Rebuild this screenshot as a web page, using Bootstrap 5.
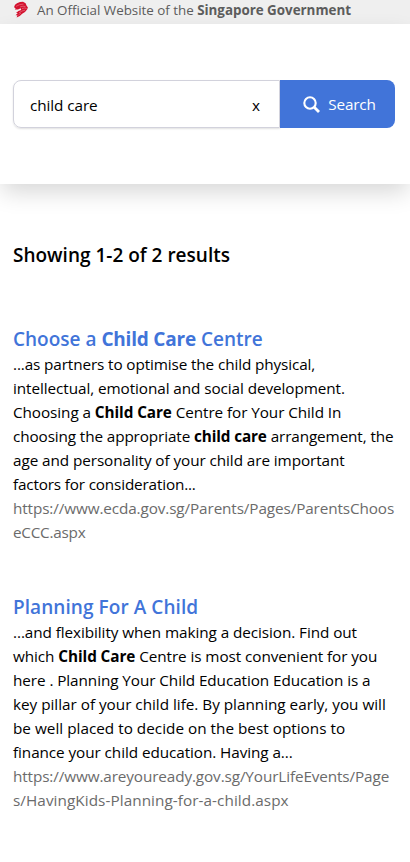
<!DOCTYPE html>
<html lang="en">
<head>
<meta charset="utf-8">
<meta name="viewport" content="width=device-width, initial-scale=1">
<title>Search results</title>
<link rel="stylesheet" href="https://cdn.jsdelivr.net/npm/bootstrap@5.3.0/dist/css/bootstrap.min.css">
<style>
body{font-family:"Segoe UI","Open Sans","Noto Sans",sans-serif;font-size:15.3px;line-height:24px;color:#000;letter-spacing:-.08px;overflow-x:hidden}
b{font-weight:700}
.gov-bar{height:24px;background:#efefef;color:#5c5c5c;font-size:13.4px;line-height:20px;padding-left:13px;letter-spacing:-.02px}
.gov-bar svg{margin-right:8px}
.search-panel{height:160px;padding:56px 15px 0 13px;box-shadow:0 10px 22px -2px rgba(0,0,0,.16)}
.search-box{height:48px;border:1px solid #d2d2dc;border-radius:8px 0 0 8px;box-shadow:0 1px 2px rgba(0,0,0,.12);padding:2px 19px 0 16px}
.search-btn{width:115px;height:48px;background:#4174d9;color:#fff;border-radius:0 8px 8px 0;border:0;font-size:inherit;letter-spacing:-.15px;padding:0 4px 0 8px}
.results{padding:59px 12px 0 13px}
.results h1,.results h2{font-size:19px;font-weight:600;line-height:24px;margin:0;letter-spacing:0}
.results h2{color:#4174d9}
.results h2 b{letter-spacing:-.2px}
.results h2.track-g{letter-spacing:.07px}
.results article{margin-top:60px}
.results article + article{margin-top:51px}
.results h2 + p{padding-top:1px}
.results p span{white-space:nowrap}
.result-url{color:#6b6b6b}
.track-a{letter-spacing:-.25px}
.track-b{letter-spacing:-.17px}
.track-c{letter-spacing:-.12px}
.track-d{letter-spacing:-.02px}
.track-e{letter-spacing:.01px}
.track-f{letter-spacing:.06px}
</style>
</head>
<body>
<div class="gov-bar d-flex">
<svg width="16" height="18" viewBox="0 0 16 18"><path fill="#d3122f" d="M1 7.3 2 4.8 4 3.2 7 1.9 10 1.7 12.6 3.2 13.5 5.4 14.9 7.4 14.1 9.6 12 12 9.2 13.8 6.8 16 3.6 17.4 4.5 15.2 2.6 15.3 4.8 12.9 3 13 5.4 11.1 8.2 10 7.6 8.3 5 9.4 1.8 9.6 2.6 8.3z"/><path d="M3 6.4 6.5 4.7 10.5 4.1M7.2 6.9 10 6.2 12.5 6.6M9 8.6 11.5 8 13.6 8.5M6 12.8 9 11 12 10.2M5.4 15 8 12.9" fill="none" stroke="#ee8d9b" stroke-width=".55"/></svg>
<span>An Official Website of the <b>Singapore Government</b></span>
</div>
<header class="search-panel d-flex align-items-start">
<div class="search-box flex-grow-1 d-flex align-items-center justify-content-between"><span>child care</span><span>x</span></div>
<button class="search-btn d-flex align-items-center justify-content-center gap-2" type="button">
<svg width="17" height="17" viewBox="0 0 17 17" fill="none" stroke="#fff" stroke-width="2.1"><circle cx="7" cy="7" r="5.7"/><path d="m11 11 5 5" stroke-width="2.8"/></svg><span>Search</span></button>
</header>
<main class="results">
<h1>Showing 1-2 of 2 results</h1>
<article>
<h2>Choose a <b>Child Care</b> Centre</h2>
<p class="mb-0"><span class="track-c">...as partners to optimise the child physical,</span><br><span>intellectual, emotional and social development.</span><br><span>Choosing a <b>Child Care</b> Centre for Your Child In</span><br><span class="track-c">choosing the appropriate <b>child care</b> arrangement, the</span><br><span>age and personality of your child are important</span><br><span class="track-b">factors for consideration...</span></p>
<p class="mb-0 result-url"><span class="track-c">https://www.ecda.gov.sg/Parents/Pages/ParentsChoos</span><br><span class="track-a">eCCC.aspx</span></p>
</article>
<article>
<h2 class="track-g">Planning For A Child</h2>
<p class="mb-0"><span>...and flexibility when making a decision. Find out</span><br><span>which <b>Child Care</b> Centre is most convenient for you</span><br><span>here . Planning Your Child Education Education is a</span><br><span class="track-d">key pillar of your child life. By planning early, you will</span><br><span class="track-e">be well placed to decide on the best options to</span><br><span>finance your child education. Having a...</span></p>
<p class="mb-0 result-url"><span class="track-c">https://www.areyouready.gov.sg/YourLifeEvents/Page</span><br><span class="track-f">s/HavingKids-Planning-for-a-child.aspx</span></p>
</article>
</main>
<script src="https://cdn.jsdelivr.net/npm/bootstrap@5.3.0/dist/js/bootstrap.bundle.min.js"></script>
</body>
</html>
